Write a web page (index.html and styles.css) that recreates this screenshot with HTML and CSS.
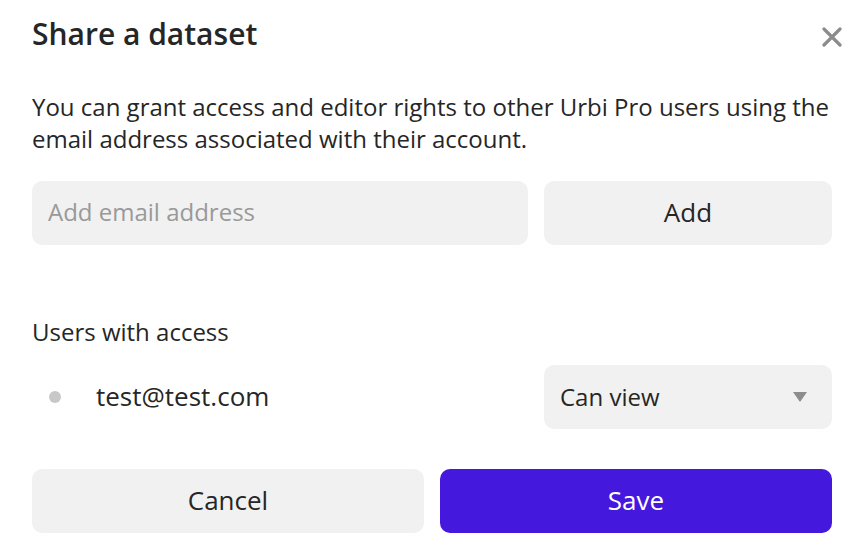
FILE: index.html
```html
<!DOCTYPE html>
<html lang="en">
<head>
<meta charset="utf-8">
<title>Share a dataset</title>
<link rel="stylesheet" href="styles.css">
</head>
<body>
<div class="dialog">
  <div class="header">
    <h1 class="title">Share a dataset</h1>
    <button class="close" aria-label="Close">
      <svg width="20" height="20" viewBox="0 0 20 20"><path d="M2 2 L18 18 M18 2 L2 18" stroke="#8c8c8c" stroke-width="3.2" stroke-linecap="round"/></svg>
    </button>
  </div>
  <p class="desc">You can grant access and editor rights to other Urbi Pro users using the email address associated with their account.</p>
  <div class="add-row">
    <input class="email-input" type="text" placeholder="Add email address">
    <button class="btn btn-grey">Add</button>
  </div>
  <div class="users-label">Users with access</div>
  <div class="user-row">
    <div class="user">
      <span class="dot"></span>
      <span class="user-email">test@test.com</span>
    </div>
    <div class="select">
      <span>Can view</span>
      <svg class="caret" width="14" height="10" viewBox="0 0 14 10"><path d="M0 0 H14 L7 10 Z" fill="#8c8c8c"/></svg>
    </div>
  </div>
  <div class="actions">
    <button class="btn btn-grey">Cancel</button>
    <button class="btn btn-primary">Save</button>
  </div>
</div>
</body>
</html>
```
FILE: styles.css
```css
* { box-sizing: border-box; }
html, body { margin: 0; padding: 0; background: #fff; }
body {
  font-family: "Open Sans", "Noto Sans", sans-serif;
  color: #262626;
  width: 868px;
  height: 560px;
  overflow: hidden;
}
.dialog {
  padding: 16px 36px 0 32px;
}
.header {
  display: flex;
  justify-content: space-between;
  align-items: flex-start;
}
.title {
  margin: 0;
  font-size: 30px;
  font-weight: 600;
  line-height: 36px;
}
.close {
  border: 0;
  background: none;
  padding: 0;
  margin: 11px -10px 0 0;
  width: 20px;
  height: 20px;
  display: flex;
}
.desc {
  margin: 39px 0 0 0;
  font-size: 24px;
  line-height: 32px;
}
.add-row {
  display: grid;
  grid-template-columns: 496px 1fr;
  gap: 16px;
  margin-top: 26px;
}
.email-input {
  height: 64px;
  border: 0;
  border-radius: 10px;
  background: #f1f1f1;
  font-family: inherit;
  font-size: 24px;
  padding: 0 16px 4px;
  color: #262626;
  outline: none;
}
.email-input::placeholder { color: #999; }
.btn {
  height: 64px;
  border: 0;
  border-radius: 10px;
  font-family: inherit;
  font-size: 26px;
  color: #262626;
  padding: 0 0 3px;
  cursor: pointer;
}
.btn-grey { background: #f1f1f1; }
.btn-primary { background: #4419dd; color: #fff; }
.users-label {
  margin-top: 71px;
  font-size: 24px;
  line-height: 32px;
}
.user-row {
  display: grid;
  grid-template-columns: 1fr 288px;
  margin-top: 17px;
  align-items: center;
}
.user {
  display: flex;
  align-items: center;
  padding-left: 17px;
  font-size: 26px;
  padding-bottom: 2px;
}
.dot {
  width: 12px;
  height: 12px;
  border-radius: 50%;
  background: #c8c8c8;
  margin: 2px 35px 0 0;
}
.select {
  height: 64px;
  border-radius: 10px;
  background: #f1f1f1;
  display: flex;
  align-items: center;
  justify-content: space-between;
  padding: 0 25px 2px 16px;
  font-size: 24px;
}
.caret { margin-top: 2px; }
.actions {
  display: grid;
  grid-template-columns: 1fr 1fr;
  gap: 16px;
  margin-top: 40px;
}
```
